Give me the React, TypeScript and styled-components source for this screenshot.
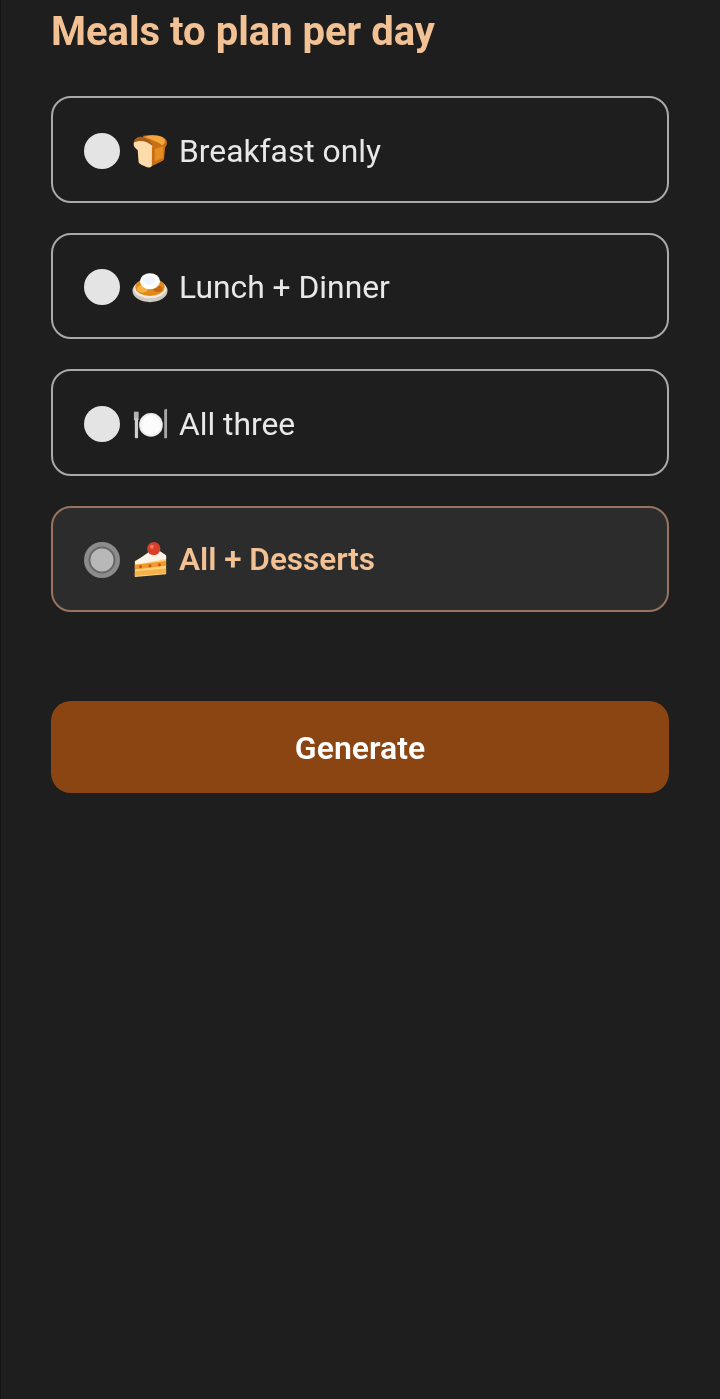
import React, { FC, ReactNode, useState } from "react";
import styled, { createGlobalStyle } from "styled-components";

const GlobalStyle = createGlobalStyle`
  html, body {
    margin: 0;
    padding: 0;
    background: #1e1e1e;
  }
  body {
    font-family: Roboto, "Liberation Sans", sans-serif;
  }
`;

const BreadIcon: FC = () => (
  <svg width="36" height="36" viewBox="0 0 38 38">
    <path
      d="M12 3 C20 1 31 2 35 6 C38 9 37 13 35 15 L34 26 C34 28 33 29 31 30 L19 36 C16 37 14 36 13 34 L11 8 Z"
      fill="#c96f14"
    />
    <path d="M13 4 C20 2 29 2 33 5 C36 8 35 11 32 13 C27 9 20 7 13 4 Z" fill="#f2a63e" />
    <path d="M24 17 L33 14 L33 26 L24 30 Z" fill="#e78c20" />
    <path
      d="M2 10 C3 5 10 3 14 5 C20 7 23 12 21 16 L21 33 C21 36 19 37 16 36 C12 35 8 33 7 31 L6 18 C3 16 1 13 2 10 Z"
      fill="#fbdcaa"
    />
    <path d="M2 10 C3 4 10 3 14 5 C18 6 22 10 22 14 C16 8 8 7 2 10 Z" fill="#a85c18" />
  </svg>
);

const CurryIcon: FC = () => (
  <svg width="36" height="36" viewBox="0 0 38 38">
    <ellipse cx="19" cy="23" rx="18.5" ry="12" fill="#cfc8bc" />
    <ellipse cx="19" cy="21" rx="17" ry="10" fill="#efe9df" />
    <ellipse cx="19" cy="19" rx="15.5" ry="9.5" fill="#e08a1c" />
    <ellipse cx="11" cy="21" rx="6" ry="4" fill="#f4b040" />
    <ellipse cx="27" cy="21" rx="5" ry="3" fill="#c9690f" />
    <ellipse cx="19" cy="13" rx="10.5" ry="8.5" fill="#ffffff" />
    <ellipse cx="18" cy="12" rx="6" ry="4.5" fill="#eef3ff" />
  </svg>
);

const PlateIcon: FC = () => (
  <svg width="36" height="36" viewBox="0 0 38 38">
    <circle cx="20" cy="20" r="12.5" fill="#ececec" />
    <circle cx="20" cy="20" r="10.5" fill="#fcfcfc" />
    <rect x="2" y="6" width="5" height="9" fill="#b4b4b4" />
    <rect x="3" y="13" width="3.4" height="21" rx="1" fill="#cfcfcf" />
    <path d="M34 4 L37 3 L37 34 L34 34 Z" fill="#a8a8a8" />
  </svg>
);

const CakeIcon: FC = () => (
  <svg width="36" height="36" viewBox="0 0 38 38">
    <path d="M3 20 L26 8 L36 15 L36 34 L3 37 Z" fill="#ffd27a" />
    <path d="M3 21 L24 6 L36 14 L36 18 L4 24 Z" fill="#fdf3e6" />
    <path d="M3 24 L36 20 L36 25 L3 29 Z" fill="#f09a2c" />
    <path d="M3 31 L36 28 L36 33 L3 36 Z" fill="#f6b24a" />
    <circle cx="9" cy="26" r="1.6" fill="#d64a28" />
    <circle cx="19" cy="25" r="1.6" fill="#d64a28" />
    <circle cx="29" cy="24" r="1.6" fill="#d64a28" />
    <circle cx="23" cy="7" r="7" fill="#d8402a" />
    <circle cx="21" cy="5" r="2" fill="#f07a5f" />
  </svg>
);

type MealOption = {
  id: string;
  label: string;
  icon: ReactNode;
};

const OPTIONS: MealOption[] = [
  { id: "breakfast", label: "Breakfast only", icon: <BreadIcon /> },
  { id: "lunch-dinner", label: "Lunch + Dinner", icon: <CurryIcon /> },
  { id: "all", label: "All three", icon: <PlateIcon /> },
  { id: "desserts", label: "All + Desserts", icon: <CakeIcon /> },
];

const App: FC = () => {
  const [selected, setSelected] = useState<string>("desserts");

  return (
    <Page>
      <GlobalStyle />
      <Title>Meals to plan per day</Title>
      <OptionList>
        {OPTIONS.map((option) => (
          <OptionCard key={option.id} $active={selected === option.id}>
            <Radio
              type="radio"
              name="meals"
              checked={selected === option.id}
              onChange={() => setSelected(option.id)}
            />
            <Emoji>{option.icon}</Emoji>
            <OptionLabel $active={selected === option.id}>
              {option.label}
            </OptionLabel>
          </OptionCard>
        ))}
      </OptionList>
      <GenerateButton type="button">Generate</GenerateButton>
    </Page>
  );
};

const Page = styled.div`
  box-sizing: border-box;
  height: 1399px;
  padding: 9px 51px 0 50px;
  background: #1e1e1e;
  border-left: 1px solid #141414;
  overflow: hidden;
  filter: blur(0.5px);
`;

const Title = styled.h2`
  margin: 0 0 41px;
  font-size: 40px;
  line-height: 46px;
  font-weight: 700;
  color: #f2c294;
`;

const OptionList = styled.div`
  display: flex;
  flex-direction: column;
  gap: 30px;
`;

const OptionCard = styled.label<{ $active: boolean }>`
  box-sizing: border-box;
  display: flex;
  align-items: center;
  height: 106.5px;
  padding: 0 31px;
  border: 2px solid ${({ $active }) => ($active ? "#96745f" : "#a9a9a9")};
  border-radius: 20px;
  background: ${({ $active }) => ($active ? "#2c2c2c" : "#1e1e1e")};
`;

const Radio = styled.input`
  appearance: none;
  flex: none;
  box-sizing: border-box;
  width: 36px;
  height: 36px;
  margin: 3px 0 0;
  border-radius: 50%;
  background: #e4e4e4;

  &:checked {
    background: radial-gradient(
      circle,
      #b8b8b8 0 11px,
      #686868 12px 13px,
      #8c8c8c 14px
    );
  }
`;

const Emoji = styled.span`
  flex: none;
  display: flex;
  width: 38px;
  height: 36px;
  margin: 3px 9px 0 12px;
`;

const OptionLabel = styled.span<{ $active: boolean }>`
  font-size: ${({ $active }) => ($active ? 31.5 : 31.8)}px;
  line-height: 40px;
  margin-top: 3px;
  font-weight: ${({ $active }) => ($active ? 600 : 400)};
  color: ${({ $active }) => ($active ? "#f2c294" : "#e8e8e8")};
`;

const GenerateButton = styled.button`
  display: block;
  width: 100%;
  height: 92px;
  margin-top: 89px;
  padding: 2px 0 0;
  border: none;
  border-radius: 20px;
  background: #8b4513;
  color: #ffffff;
  font-family: Roboto, "Liberation Sans", sans-serif;
  font-size: 32px;
  font-weight: 600;
`;

export default App;
